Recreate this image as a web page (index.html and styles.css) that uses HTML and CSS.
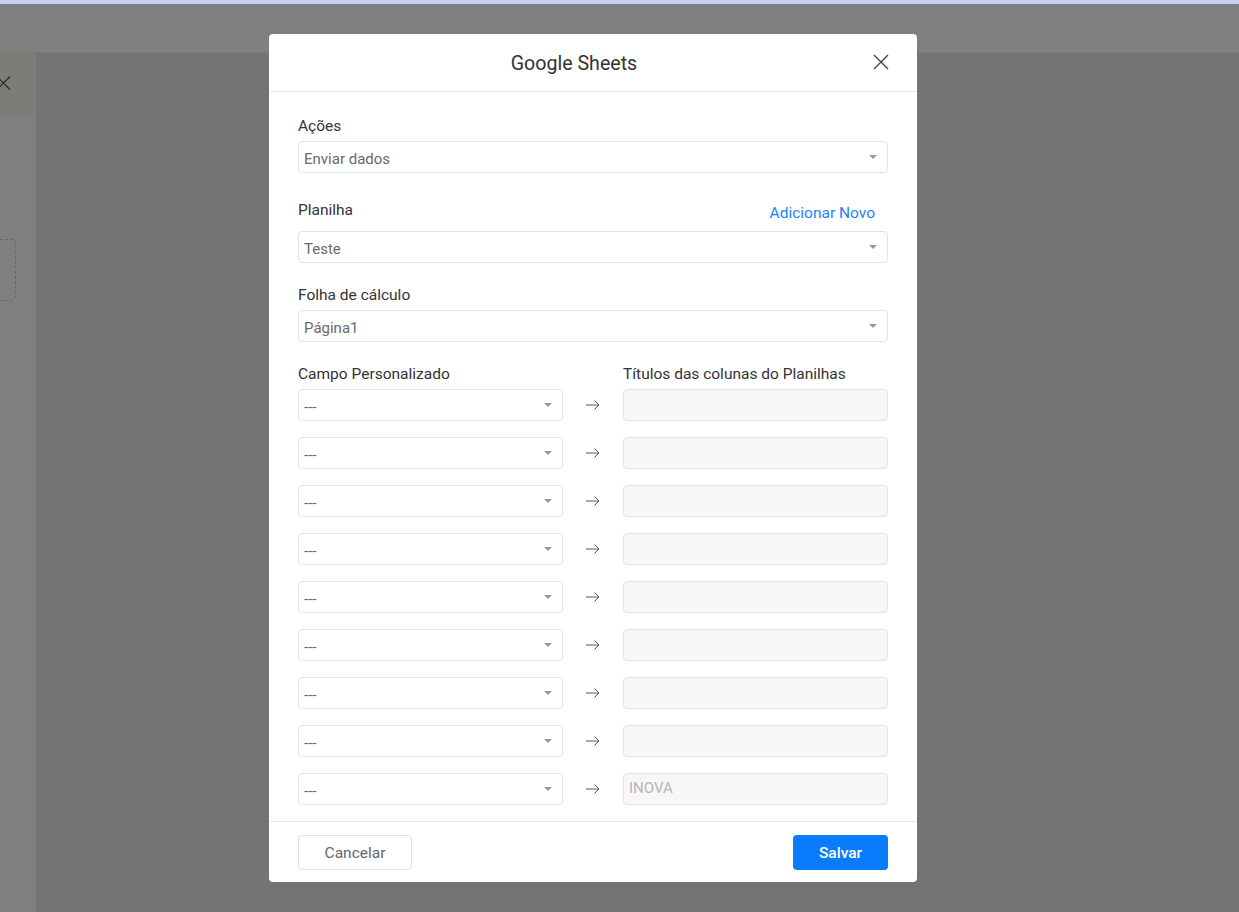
FILE: index.html
```html
<!DOCTYPE html>
<html lang="pt">
<head>
<meta charset="utf-8">
<title>Google Sheets</title>
<link rel="stylesheet" href="styles.css">
</head>
<body>
<div class="page">
  <div class="topstrip"></div>
  <div class="topbar"></div>
  <div class="main">
    <aside class="side">
      <div class="side-head">
        <svg class="side-x" width="12" height="14" viewBox="0 0 12 14"><path d="M-3 0.5L10 13.5M10 0.5L-3 13.5" stroke="#2a2a2a" stroke-width="1.2" fill="none"/></svg>
      </div>
      <div class="side-body"><div class="dashed"></div></div>
    </aside>
    <div class="content"></div>
  </div>
</div>

<div class="modal">
  <div class="modal-head">
    <h1 class="modal-title">Google Sheets</h1>
    <button class="close" aria-label="Fechar">
      <svg width="16" height="16" viewBox="0 0 16 16"><path d="M1 1L15 15M15 1L1 15" stroke="#444" stroke-width="1.4" fill="none"/></svg>
    </button>
  </div>
  <div class="modal-body">
    <div class="group">
      <div class="label">Ações</div>
      <div class="select"><span>Enviar dados</span><i class="caret"></i></div>
    </div>
    <div class="group g2">
      <div class="label-row">
        <div class="label">Planilha</div>
        <a class="link">Adicionar Novo</a>
      </div>
      <div class="select"><span>Teste</span><i class="caret"></i></div>
    </div>
    <div class="group g3">
      <div class="label">Folha de cálculo</div>
      <div class="select"><span>Página1</span><i class="caret"></i></div>
    </div>
    <div class="group g3">
      <div class="map-head">
        <div class="label">Campo Personalizado</div>
        <div class="label">Títulos das colunas do Planilhas</div>
      </div>
      <div class="map-list">
        <div class="map-row"><div class="select half"><span>---</span><i class="caret"></i></div><svg class="arrow" width="14" height="10" viewBox="0 0 14 10"><path d="M0 5H13M8.5 0.5L13 5L8.5 9.5" stroke="#555" stroke-width="1" fill="none"/></svg><div class="input"></div></div>
        <div class="map-row"><div class="select half"><span>---</span><i class="caret"></i></div><svg class="arrow" width="14" height="10" viewBox="0 0 14 10"><path d="M0 5H13M8.5 0.5L13 5L8.5 9.5" stroke="#555" stroke-width="1" fill="none"/></svg><div class="input"></div></div>
        <div class="map-row"><div class="select half"><span>---</span><i class="caret"></i></div><svg class="arrow" width="14" height="10" viewBox="0 0 14 10"><path d="M0 5H13M8.5 0.5L13 5L8.5 9.5" stroke="#555" stroke-width="1" fill="none"/></svg><div class="input"></div></div>
        <div class="map-row"><div class="select half"><span>---</span><i class="caret"></i></div><svg class="arrow" width="14" height="10" viewBox="0 0 14 10"><path d="M0 5H13M8.5 0.5L13 5L8.5 9.5" stroke="#555" stroke-width="1" fill="none"/></svg><div class="input"></div></div>
        <div class="map-row"><div class="select half"><span>---</span><i class="caret"></i></div><svg class="arrow" width="14" height="10" viewBox="0 0 14 10"><path d="M0 5H13M8.5 0.5L13 5L8.5 9.5" stroke="#555" stroke-width="1" fill="none"/></svg><div class="input"></div></div>
        <div class="map-row"><div class="select half"><span>---</span><i class="caret"></i></div><svg class="arrow" width="14" height="10" viewBox="0 0 14 10"><path d="M0 5H13M8.5 0.5L13 5L8.5 9.5" stroke="#555" stroke-width="1" fill="none"/></svg><div class="input"></div></div>
        <div class="map-row"><div class="select half"><span>---</span><i class="caret"></i></div><svg class="arrow" width="14" height="10" viewBox="0 0 14 10"><path d="M0 5H13M8.5 0.5L13 5L8.5 9.5" stroke="#555" stroke-width="1" fill="none"/></svg><div class="input"></div></div>
        <div class="map-row"><div class="select half"><span>---</span><i class="caret"></i></div><svg class="arrow" width="14" height="10" viewBox="0 0 14 10"><path d="M0 5H13M8.5 0.5L13 5L8.5 9.5" stroke="#555" stroke-width="1" fill="none"/></svg><div class="input"></div></div>
        <div class="map-row"><div class="select half"><span>---</span><i class="caret"></i></div><svg class="arrow" width="14" height="10" viewBox="0 0 14 10"><path d="M0 5H13M8.5 0.5L13 5L8.5 9.5" stroke="#555" stroke-width="1" fill="none"/></svg><div class="input"><span class="ph">INOVA</span></div></div>
      </div>
    </div>
  </div>
  <div class="modal-foot">
    <button class="btn btn-cancel">Cancelar</button>
    <button class="btn btn-save">Salvar</button>
  </div>
</div>
</body>
</html>
```

FILE: styles.css
```css
* { box-sizing: border-box; }
html, body { margin: 0; padding: 0; }
body {
  width: 1239px;
  height: 912px;
  overflow: hidden;
  font-family: Roboto, "Liberation Sans", Arial, sans-serif;
  background: #737476;
  position: relative;
}
.page { display: flex; flex-direction: column; height: 912px; }
.topstrip { height: 4px; background: #c9d0f7; }
.topbar { height: 49px; background: #808080; border-bottom: 1px solid #7a7a7a; }
.main { flex: 1; display: flex; }
.side { width: 36px; background: #7f7f7f; display: flex; flex-direction: column; }
.side-head {
  height: 62px;
  background: #7e7c78;
  position: relative;
  overflow: hidden;
}
.side-x {
  position: absolute;
  left: 0;
  top: 23px;
}
.side-body { flex: 1; position: relative; overflow: hidden; }
.dashed {
  position: absolute;
  left: -30px;
  top: 124px;
  width: 46px;
  height: 62px;
  border: 1px dashed #5d6880;
  border-radius: 5px;
}
.content { flex: 1; background: #737476; }

.modal {
  position: absolute;
  left: 269px;
  top: 34px;
  width: 648px;
  height: 848px;
  background: #fff;
  border-radius: 4px;
  display: flex;
  flex-direction: column;
}
.modal-head {
  height: 59px;
  border-bottom: 1px solid #e4e6eb;
  display: flex;
  align-items: center;
  justify-content: center;
  padding-right: 38px;
  position: relative;
}
.modal-title {
  margin: 0;
  font-size: 19.6px;
  font-weight: 400;
  color: #333;
  line-height: 24px;
  padding-top: 2px;
}
.close {
  position: absolute;
  right: 28px;
  top: 20px;
  width: 16px;
  height: 16px;
  padding: 0;
  border: 0;
  background: none;
  display: flex;
}
.modal-body {
  flex: 1;
  padding: 22px 29px 16px;
}
.label {
  font-size: 15.5px;
  line-height: 22px;
  color: #333;
  margin-bottom: 5px;
  padding-top: 1px;
  height: 22px;
}
.g2 { margin-top: 24px; }
.g3 { margin-top: 20px; }
.label-row {
  height: 34px;
  display: flex;
  justify-content: space-between;
  align-items: flex-start;
}
.label-row .label { margin-top: 1px; }
.link {
  font-size: 15.5px;
  line-height: 22px;
  color: #1a84f7;
  margin-top: 5px;
  margin-right: 13px;
}
.select {
  height: 32px;
  border: 1px solid #dfe3ea;
  border-radius: 4px;
  display: flex;
  align-items: center;
  justify-content: space-between;
  padding: 0 10px 0 5px;
  font-size: 15px;
  color: #6a6a6a;
}
.select span { line-height: 18px; padding-top: 3px; }
.caret {
  width: 0;
  height: 0;
  border-left: 4px solid transparent;
  border-right: 4px solid transparent;
  border-top: 4px solid #999;
  margin-top: -1px;
}
.map-head {
  display: grid;
  grid-template-columns: 325px 265px;
}
.map-head .label { margin-bottom: 5px; }
.map-list { display: flex; flex-direction: column; gap: 16px; }
.map-row {
  display: grid;
  grid-template-columns: 265px 60px 265px;
  align-items: center;
}
.arrow { margin-left: 23px; }
.input {
  height: 32px;
  background: #f7f7f8;
  border: 1px solid #e2e5eb;
  border-radius: 4px;
  display: flex;
  align-items: center;
  padding: 0 5px;
  font-size: 15px;
}
.ph { color: #b5b5b5; margin-top: -2px; }
.modal-foot {
  height: 61px;
  border-top: 1px solid #e4e6eb;
  display: flex;
  justify-content: space-between;
  align-items: flex-start;
  padding: 13px 29px 0;
}
.btn {
  height: 35px;
  border-radius: 4px;
  font-family: Roboto, "Liberation Sans", Arial, sans-serif;
  font-size: 15.5px;
  cursor: pointer;
}
.btn-cancel {
  width: 114px;
  background: #fff;
  border: 1px solid #dde1e8;
  color: #666;
}
.btn-save {
  width: 95px;
  background: #0a7cfb;
  border: 0;
  color: #fff;
  font-weight: 500;
}
```
